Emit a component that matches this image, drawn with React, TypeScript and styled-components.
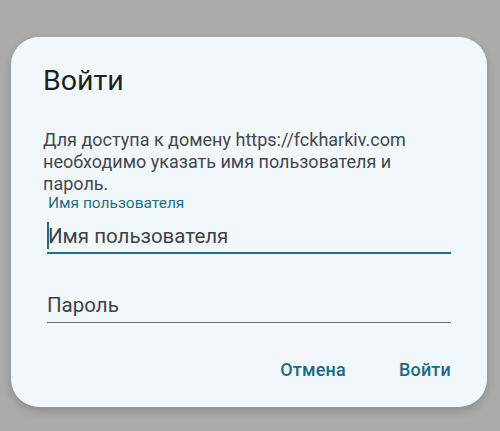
import React from "react";
import styled, { createGlobalStyle } from "styled-components";

const Global = createGlobalStyle`
  html, body { margin: 0; padding: 0; background: #ababab; }
  body { font-family: Roboto, "Noto Sans", sans-serif; }
`;

const Screen = styled.div`
  width: 500px;
  height: 431px;
  box-sizing: border-box;
  padding: 37px 13px 0 11px;
  background: #ababab;
`;

const Card = styled.div`
  width: 476px;
  height: 370px;
  box-sizing: border-box;
  background: #f2f7fb;
  border-radius: 28px;
  box-shadow: 0 4px 10px rgba(0, 0, 0, 0.18);
  padding: 22px 36px 0 32px;
  display: flex;
  flex-direction: column;
`;

const Title = styled.h1`
  margin: 0;
  font-size: 28.5px;
  font-weight: 400;
  color: #1d1f22;
  line-height: 44px;
`;

const Message = styled.p`
  margin: 26px 0 0;
  font-size: 18px;
  line-height: 22px;
  color: #44474b;
`;

const Field = styled.div<{ $focused?: boolean }>`
  margin-left: 4px;
  display: flex;
  flex-direction: column;
  border-bottom: ${(p) => (p.$focused ? "2px solid #1c7088" : "1.5px solid #6f7378")};
`;

const FloatLabel = styled.label`
  font-size: 15.5px;
  line-height: 16px;
  color: #1c7088;
  margin-left: 1px;
`;

const InputRow = styled.div<{ $focused?: boolean }>`
  display: flex;
  align-items: flex-end;
  height: ${(p) => (p.$focused ? "41px" : "68px")};
  padding-bottom: ${(p) => (p.$focused ? "2px" : "3px")};
  box-sizing: border-box;
`;

const Caret = styled.span`
  width: 2px;
  height: 27px;
  margin-bottom: 1px;
  background: #1c7088;
  margin-right: -1px;
`;

const Placeholder = styled.span`
  font-size: 20.5px;
  color: #3e4246;
  line-height: 28px;
`;

const Actions = styled.div`
  display: flex;
  justify-content: flex-end;
  gap: 53px;
  margin-top: 35px;
`;

const ActionButton = styled.button`
  border: none;
  background: none;
  padding: 0;
  font-family: Roboto, "Noto Sans", sans-serif;
  font-size: 18px;
  font-weight: 500;
  color: #1b6a82;
  line-height: 24px;
  letter-spacing: 0.2px;
`;

export default function App() {
  return (
    <>
      <Global />
      <Screen>
        <Card>
          <Title>Войти</Title>
          <Message>
            Для доступа к домену https://fckharkiv.com необходимо указать имя пользователя и
            пароль.
          </Message>
          <Field $focused>
            <FloatLabel>Имя пользователя</FloatLabel>
            <InputRow $focused>
              <Caret />
              <Placeholder>Имя пользователя</Placeholder>
            </InputRow>
          </Field>
          <Field>
            <InputRow>
              <Placeholder>Пароль</Placeholder>
            </InputRow>
          </Field>
          <Actions>
            <ActionButton>Отмена</ActionButton>
            <ActionButton>Войти</ActionButton>
          </Actions>
        </Card>
      </Screen>
    </>
  );
}
